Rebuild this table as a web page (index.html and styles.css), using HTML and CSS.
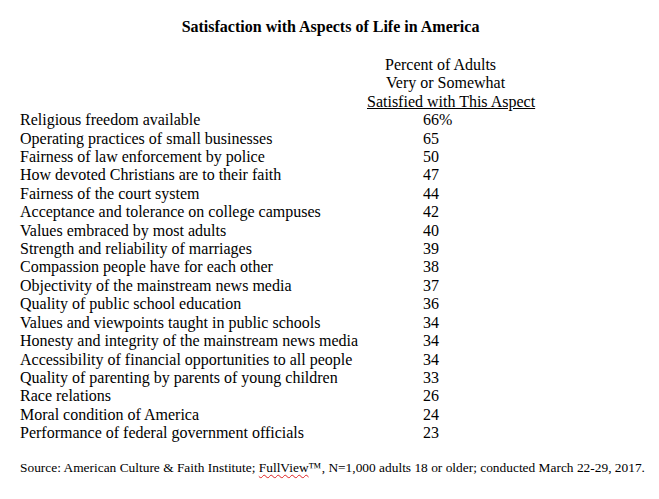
FILE: index.html
```html
<!DOCTYPE html>
<html>
<head>
<meta charset="utf-8">
<link rel="stylesheet" href="styles.css">
</head>
<body>
<div class="page">
  <h1 class="title">Satisfaction with Aspects of Life in America</h1>
  <div class="head">
    <div class="head-col">
      <div class="h1l">Percent of Adults</div>
      <div class="h2l">Very or Somewhat</div>
      <div class="h3l">Satisfied with This Aspect</div>
    </div>
  </div>
  <div class="rows">
    <div class="lab">Religious freedom available</div><div class="num">66%</div>
    <div class="lab">Operating practices of small businesses</div><div class="num">65</div>
    <div class="lab">Fairness of law enforcement by police</div><div class="num">50</div>
    <div class="lab">How devoted Christians are to their faith</div><div class="num">47</div>
    <div class="lab">Fairness of the court system</div><div class="num">44</div>
    <div class="lab">Acceptance and tolerance on college campuses</div><div class="num">42</div>
    <div class="lab">Values embraced by most adults</div><div class="num">40</div>
    <div class="lab">Strength and reliability of marriages</div><div class="num">39</div>
    <div class="lab">Compassion people have for each other</div><div class="num">38</div>
    <div class="lab">Objectivity of the mainstream news media</div><div class="num">37</div>
    <div class="lab">Quality of public school education</div><div class="num">36</div>
    <div class="lab">Values and viewpoints taught in public schools</div><div class="num">34</div>
    <div class="lab">Honesty and integrity of the mainstream news media</div><div class="num">34</div>
    <div class="lab">Accessibility of financial opportunities to all people</div><div class="num">34</div>
    <div class="lab">Quality of parenting by parents of young children</div><div class="num">33</div>
    <div class="lab">Race relations</div><div class="num">26</div>
    <div class="lab">Moral condition of America</div><div class="num">24</div>
    <div class="lab">Performance of federal government officials</div><div class="num">23</div>
  </div>
  <p class="source">Source: American Culture &amp; Faith Institute; <span class="spell">FullView</span>™, N=1,000 adults 18 or older; conducted March 22-29, 2017.</p>
</div>
</body>
</html>
```
FILE: styles.css
```css
html, body {
  margin: 0;
  padding: 0;
  background: #fff;
}
body {
  font-family: "Liberation Serif", "Times New Roman", serif;
  color: #000;
  width: 659px;
  height: 499px;
  overflow: hidden;
}
.page {
  padding: 17px 0 0 20px;
}
.title {
  margin: 0 0 0 -18px;
  font-size: 16px;
  font-weight: bold;
  text-align: center;
  line-height: 20px;
}
.head {
  margin-top: 19px;
  display: flex;
  padding-left: 347px;
}
.head-col {
  font-size: 16px;
  line-height: 18.4px;
  text-align: left;
}
.h1l {
  padding-left: 18px;
}
.h2l {
  padding-left: 19px;
}
.h3l {
  text-decoration: underline;
}
.rows {
  display: grid;
  grid-template-columns: 403px auto;
  font-size: 16px;
  line-height: 18.4px;
}
.source {
  margin: 17px 0 0 0;
  font-size: 13.4px;
  line-height: 16px;
}
.spell {
  text-decoration: underline wavy #d22;
  text-decoration-thickness: 1px;
  text-underline-offset: 2px;
}
```
